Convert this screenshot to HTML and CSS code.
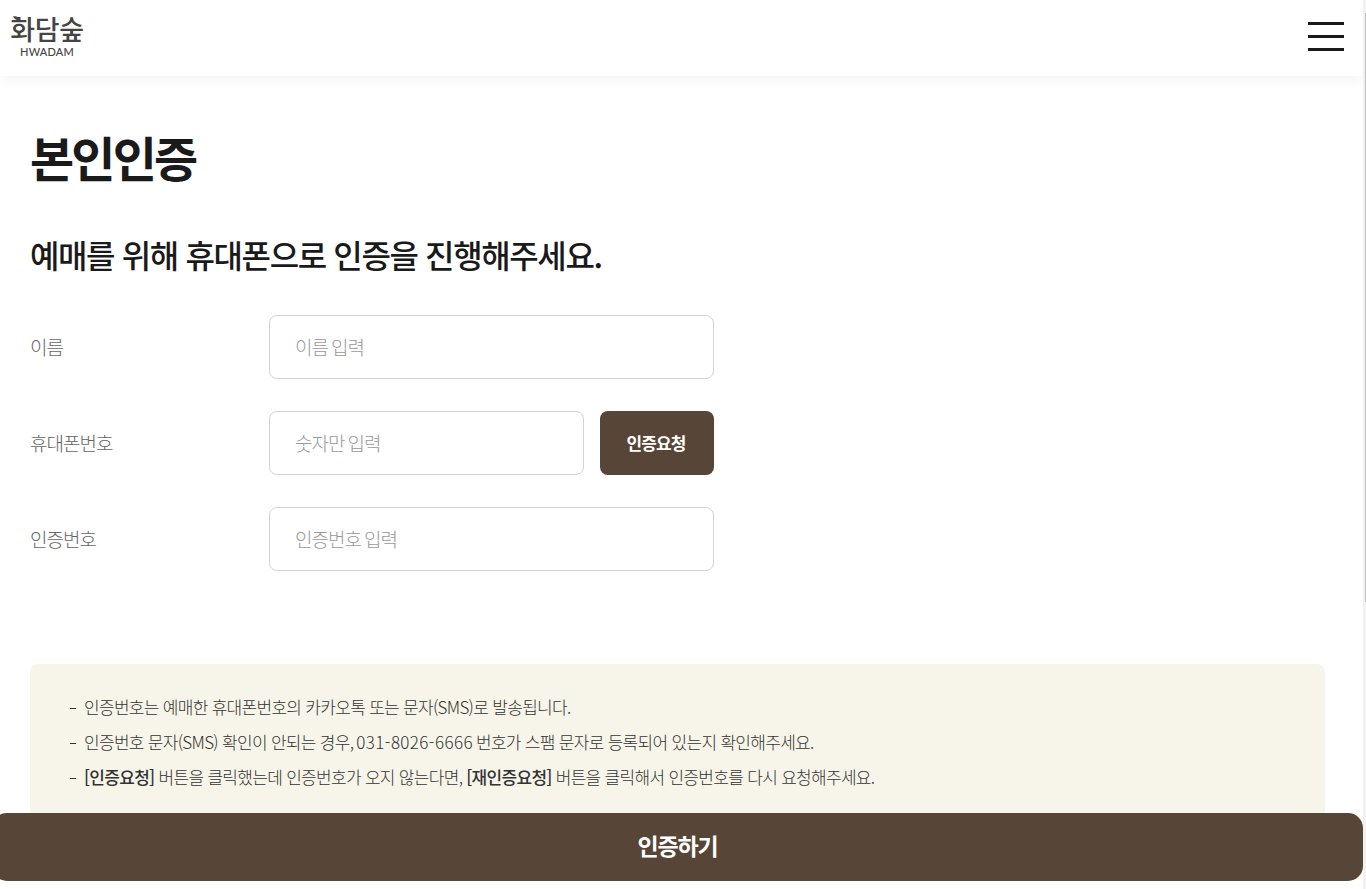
FILE: index.html
```html
<!DOCTYPE html>
<html lang="ko">
  <head>
    <meta charset="utf-8">
    <meta name="viewport" content="width=device-width, initial-scale=1.0">
    <title>본인인증 | 화담숲</title>
    <link rel="stylesheet" href="styles.css">
  </head>
  <body>
    <header class="header">
      <a class="logo" href="#">
        <svg class="leaf" width="8" height="5" viewBox="0 0 8 5"><path d="M0 0.5C3 -.3 6.5 1 7.5 4.5C4.5 4.8 1.5 3.5 0 .5Z" fill="#444"/></svg>
        <span class="logo-ko">화담숲</span>
        <span class="logo-en">HWADAM</span>
      </a>
      <button class="menu" aria-label="메뉴"><i></i><i></i><i></i></button>
    </header>
    <main class="content">
      <h1>본인인증</h1>
      <h2>예매를 위해 휴대폰으로 인증을 진행해주세요.</h2>
      <form class="form">
        <div class="row">
          <label for="name">이름</label>
          <input id="name" type="text" placeholder="이름 입력">
        </div>
        <div class="row">
          <label for="phone">휴대폰번호</label>
          <input id="phone" type="text" placeholder="숫자만 입력">
          <button class="request" type="button">인증요청</button>
        </div>
        <div class="row">
          <label for="code">인증번호</label>
          <input id="code" type="text" placeholder="인증번호 입력">
        </div>
      </form>
      <ul class="notice">
        <li><p>인증번호는 예매한 휴대폰번호의 카카오톡 또는 문자(SMS)로 발송됩니다.</p></li>
        <li><p>인증번호 문자(SMS) 확인이 안되는 경우, <span class="tel">031-8026-6666</span> 번호가 스팸 문자로 등록되어 있는지 확인해주세요.</p></li>
        <li><p><b>[인증요청]</b> 버튼을 클릭했는데 인증번호가 오지 않는다면, <b>[재인증요청]</b> 버튼을 클릭해서 인증번호를 다시 요청해주세요.</p></li>
      </ul>
    </main>
    <button class="submit">인증하기</button>
    <div class="scrollbar"><div class="thumb"></div></div>
  </body>
</html>
```

FILE: styles.css
```css
* {
    box-sizing: border-box;
}
body {
    margin: 0;
    height: 889px;
    overflow: hidden;
    background: #fff;
    color: #1a1a1a;
    font-family: 'Noto Sans CJK KR', 'Noto Sans', sans-serif;
}
h1, h2, ul, p {
    margin: 0;
    padding: 0;
}
button, input {
    font-family: inherit;
}
button {
    border: 0;
    padding: 0;
}
.header {
    display: flex;
    justify-content: space-between;
    width: 1363px;
    height: 76px;
    padding: 14px 19px 0 10px;
    box-shadow: 0 5px 12px rgba(0, 0, 0, .04);
}
.logo {
    position: relative;
    display: flex;
    flex-direction: column;
    align-items: center;
    width: 74px;
    color: #444;
    text-decoration: none;
}
.leaf {
    position: absolute;
    left: 3px;
    top: 2px;
}
.logo-ko {
    font-size: 27px;
    font-weight: 500;
    line-height: 30px;
    letter-spacing: -.4px;
    white-space: nowrap;
}
.logo-en {
    margin-top: 1px;
    font-family: Lato, sans-serif;
    font-size: 11px;
    font-weight: 500;
    line-height: 14px;
    letter-spacing: .2px;
}
.menu {
    display: flex;
    flex-direction: column;
    gap: 10px;
    width: 36px;
    height: 29px;
    margin-top: 8px;
    background: none;
}
.menu i {
    width: 36px;
    height: 3px;
    background: #1a1a1a;
}
.content {
    width: 1355px;
    padding: 45px 30px 0;
}
h1 {
    font-size: 48px;
    font-weight: 700;
    line-height: 70px;
    letter-spacing: -2.8px;
}
h2 {
    margin-top: 41px;
    font-size: 32px;
    font-weight: 500;
    line-height: 44px;
    letter-spacing: -1.38px;
}
.form {
    display: flex;
    flex-direction: column;
    gap: 32px;
    width: 684px;
    margin-top: 39px;
}
.row {
    display: flex;
    align-items: center;
}
label {
    flex: none;
    width: 239px;
    padding-bottom: 2px;
    color: #666;
    font-size: 19px;
    font-weight: 300;
    letter-spacing: -.95px;
}
input {
    flex: 1;
    min-width: 0;
    height: 64px;
    padding: 0 25px 2px;
    border: 1px solid #d3d3d3;
    border-radius: 8px;
    font-size: 19px;
    font-weight: 300;
    letter-spacing: -.95px;
    word-spacing: -1.5px;
}
input::placeholder {
    color: #999;
}
.request {
    width: 114px;
    height: 64px;
    margin-left: 16px;
    padding: 0 2px 2px 0;
    border-radius: 8px;
    background: #574537;
    color: #fff;
    font-size: 17px;
    font-weight: 700;
    letter-spacing: -.9px;
}
.notice {
    height: 200px;
    margin-top: 93px;
    padding: 26px 40px;
    border-radius: 8px;
    background: #f7f5e9;
    color: #333;
    font-size: 17px;
    font-weight: 300;
    line-height: 33px;
    letter-spacing: -.7px;
    list-style: none;
    white-space: nowrap;
}
.notice li {
    display: flex;
    align-items: center;
    height: 35px;
}
.notice li::before {
    content: '';
    width: 6px;
    height: 1px;
    margin: 1px 8px 0 0;
    background: #333;
}
.notice p {
    padding-bottom: 2px;
}
.notice b {
    font-weight: 500;
}
.tel {
    margin: 0 -1px;
    letter-spacing: .4px;
}
.submit {
    position: fixed;
    left: -8px;
    bottom: 8px;
    width: 1371px;
    height: 68px;
    padding-bottom: 4px;
    border-radius: 15px;
    background: #574537;
    color: #fff;
    font-size: 23px;
    font-weight: 700;
    letter-spacing: -1.2px;
}
.scrollbar {
    position: fixed;
    top: 0;
    right: 0;
    width: 3px;
    height: 889px;
    padding: 13px 0 0 2px;
    background: #f1f1f1;
}
.thumb {
    height: 589px;
    background: #c1c1c1;
}
```
